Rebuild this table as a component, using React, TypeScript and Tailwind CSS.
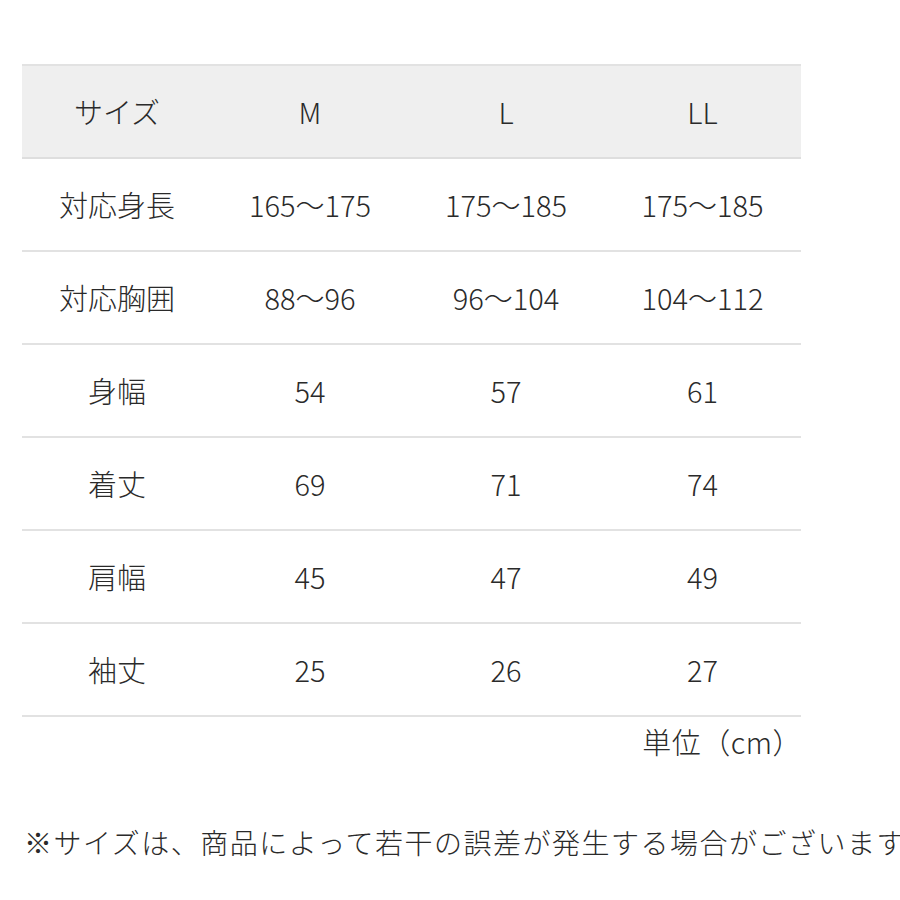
const font = { fontFamily: '"Noto Sans CJK JP", "Noto Sans", sans-serif' };

const header = ["サイズ", "M", "L", "LL"];

const rows = [
  ["対応身長", "165～175", "175～185", "175～185"],
  ["対応胸囲", "88～96", "96～104", "104～112"],
  ["身幅", "54", "57", "61"],
  ["着丈", "69", "71", "74"],
  ["肩幅", "45", "47", "49"],
  ["袖丈", "25", "26", "27"],
];

const cols = "grid grid-cols-[190px_196px_196px_197px]";

export default function App() {
  return (
    <div className="w-[900px] h-[900px] bg-white overflow-hidden text-[#2a2a2a]" style={font}>
      <div className="pt-[64px] pl-[22px]">
        <div className="w-[779px] border-t-2 border-[#e2e2e2]">
          <div className={`${cols} h-[93px] bg-[#efefef] border-b-2 border-[#dedede] items-center`}>
            {header.map((h) => (
              <div key={h} className="text-center text-[29px] leading-none font-light">
                {h}
              </div>
            ))}
          </div>
          {rows.map((r) => (
            <div key={r[0]} className={`${cols} h-[93px] border-b-2 border-[#e2e2e2] items-center`}>
              {r.map((c, i) => (
                <div key={i} className="text-center text-[29px] leading-none font-light">
                  {c}
                </div>
              ))}
            </div>
          ))}
        </div>
        <div className="w-[780px] text-right text-[29px] leading-[40px] mt-[4px] font-light tracking-[0.5px]">単位（cm）</div>
      </div>
      <div className="mt-[61px] pl-[24px] whitespace-nowrap text-[28px] leading-[40px] tracking-[1.5px] font-light">
        ※サイズは、商品によって若干の誤差が発生する場合がございます。
      </div>
    </div>
  );
}
